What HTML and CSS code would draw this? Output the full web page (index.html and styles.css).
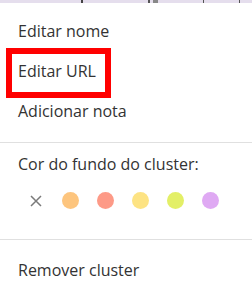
FILE: index.html
```html
<!DOCTYPE html>
<html lang="pt">
<head>
<meta charset="utf-8">
<link rel="stylesheet" href="styles.css">
</head>
<body>
<div class="backdrop"></div>
<div class="menu">
  <div class="section section-top">
    <div class="item">Editar nome</div>
    <div class="item item-marked">Editar URL<span class="mark"></span></div>
    <div class="item">Adicionar nota</div>
  </div>
  <div class="section section-colors">
    <div class="label">Cor do fundo do cluster:</div>
    <div class="swatches">
      <span class="swatch swatch-none">
        <svg width="12" height="12" viewBox="0 0 12 12"><path d="M1 1L11 11M11 1L1 11" stroke="#7a7a7a" stroke-width="1.5" fill="none"/></svg>
      </span>
      <span class="swatch dot orange"></span>
      <span class="swatch dot salmon"></span>
      <span class="swatch dot yellow"></span>
      <span class="swatch dot lime"></span>
      <span class="swatch dot lilac"></span>
    </div>
  </div>
  <div class="section section-bottom">
    <div class="item">Remover cluster</div>
  </div>
</div>
</body>
</html>
```
FILE: styles.css
```css
html, body {
  margin: 0;
  padding: 0;
  background: #fff;
}
body {
  font-family: "Open Sans", "Noto Sans", sans-serif;
  font-size: 16px;
  color: #333;
  width: 252px;
  height: 298px;
  overflow: hidden;
}
.backdrop {
  height: 3px;
  background:
    linear-gradient(to right,
      transparent 81px, #444 81px, #444 83px, transparent 83px,
      transparent 148px, #555 148px, #555 150px, transparent 150px,
      transparent 153px, #888 153px, #888 158px, transparent 158px,
      transparent 203px, #555 203px, #555 204px, transparent 204px,
      transparent 239px, #555 239px, #555 240px, transparent 240px),
    #e5deed;
}
.menu {
  background: #fff;
}
.section-top {
  padding: 8px 0 11px;
  border-bottom: 1px solid #e0e0e0;
}
.item {
  position: relative;
  padding: 8px 18px;
  line-height: 24px;
  white-space: nowrap;
}
.mark {
  position: absolute;
  left: 6px;
  top: -3px;
  width: 93px;
  height: 38px;
  border: 6px solid #ff0000;
}
.section-colors {
  padding: 9px 0 30px;
  border-bottom: 1px solid #e0e0e0;
}
.label {
  padding: 0 18px;
  line-height: 24px;
}
.swatches {
  display: flex;
  align-items: center;
  gap: 18px;
  padding-left: 27px;
  margin-top: 16px;
}
.swatch {
  width: 17px;
  height: 17px;
  display: flex;
  align-items: center;
  justify-content: center;
}
.dot {
  border-radius: 50%;
}
.orange { background: #fdc57e; }
.salmon { background: #fd9a87; }
.yellow { background: #fde383; }
.lime { background: #e3ef67; }
.lilac { background: #dfa9f3; }
.section-bottom {
  padding-top: 10px;
}
```
